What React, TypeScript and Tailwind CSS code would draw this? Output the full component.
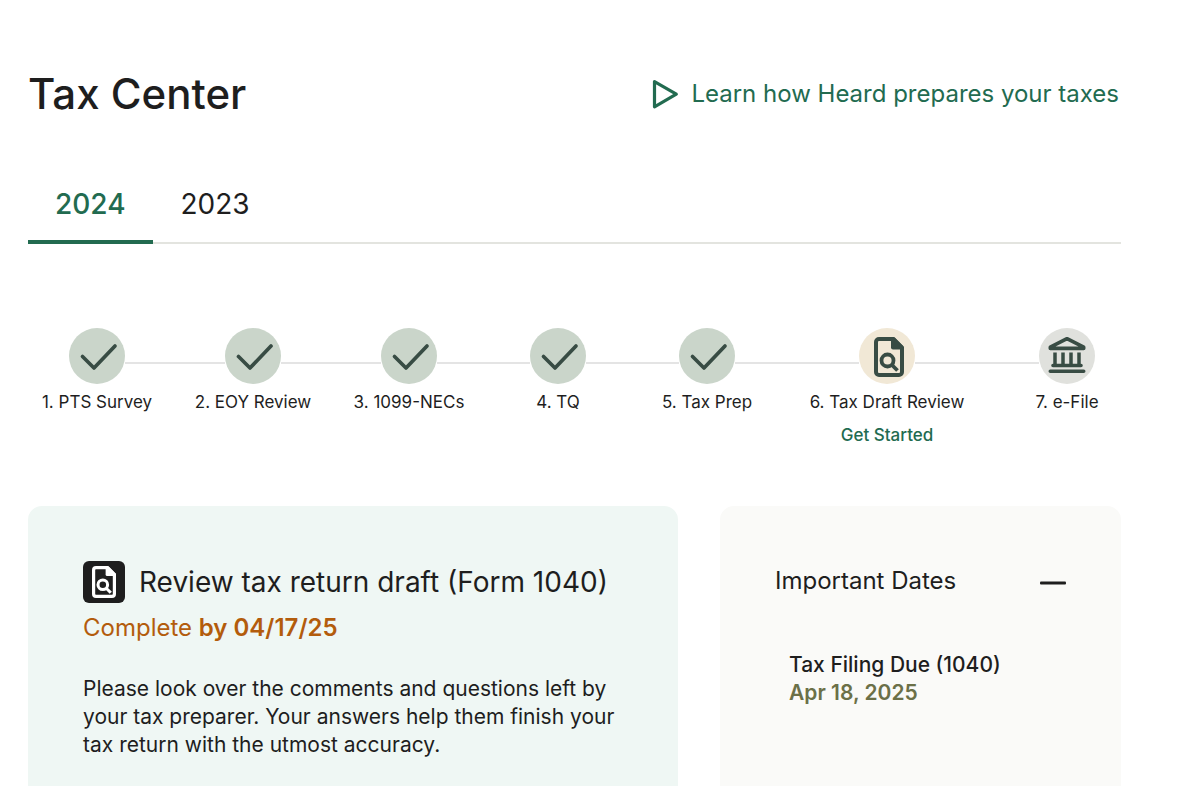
import type { ReactNode } from "react";

type Step = {
  label: string;
  status: "done" | "active" | "upcoming";
  action?: string;
};

const steps: Step[] = [
  { label: "1. PTS Survey", status: "done" },
  { label: "2. EOY Review", status: "done" },
  { label: "3. 1099-NECs", status: "done" },
  { label: "4. TQ", status: "done" },
  { label: "5. Tax Prep", status: "done" },
  { label: "6. Tax Draft Review", status: "active", action: "Get Started" },
  { label: "7. e-File", status: "upcoming" },
];

function PlayIcon() {
  return (
    <svg width="28" height="32" viewBox="0 0 28 32" fill="none">
      <path
        d="M3.5 3.6v25.200L25.300 16.200z"
        stroke="currentColor"
        strokeWidth="3.2"
        strokeLinejoin="round"
      />
    </svg>
  );
}

function CheckIcon() {
  return (
    <svg width="56" height="56" viewBox="0 0 56 56" fill="none">
      <path
        d="M13.5 28.500 25 40 46 18"
        stroke="currentColor"
        strokeWidth="3.7"
        strokeLinecap="round"
        strokeLinejoin="round"
      />
    </svg>
  );
}

function DraftIcon({ className }: { className: string }) {
  return (
    <svg className={className} viewBox="0 0 30 40" fill="none">
      <path
        d="M5 2h14.5L28 10.500V35a3 3 0 0 1-3 3H5a3 3 0 0 1-3-3V5a3 3 0 0 1 3-3z"
        stroke="currentColor"
        strokeWidth="4"
      />
      <path d="M17 1h4l8 8v3.500H19a2 2 0 0 1-2-2z" fill="currentColor" />
      <circle cx="13.500" cy="23.500" r="6" stroke="currentColor" strokeWidth="3.800" />
      <path d="m17.500 27.500 6 6" stroke="currentColor" strokeWidth="3.800" />
    </svg>
  );
}

function BankIcon() {
  return (
    <svg width="38" height="38" viewBox="0 0 38 38" fill="none" stroke="currentColor">
      <path
        d="M2.300 12.400v-1.200L19 2.700l16.700 8.500v1.200z"
        strokeWidth="3.600"
        strokeLinejoin="round"
      />
      <path d="M7 16.500v12.500M15 16.500v12.500M23 16.500v12.500M31 16.500v12.500" strokeWidth="3.500" />
      <path d="M5 29.500h28M2.300 35.200h33.400" strokeWidth="3.600" strokeLinecap="round" />
    </svg>
  );
}

function StepCircle({ status }: { status: Step["status"] }) {
  if (status === "done") {
    return (
      <div className="size-14 rounded-full bg-[#cad5ca]">
        <CheckIcon />
      </div>
    );
  }
  if (status === "active") {
    return (
      <div className="flex size-14 justify-center rounded-full bg-[#f1e8d6] pt-[9px] pl-1">
        <DraftIcon className="h-10 w-[30px]" />
      </div>
    );
  }
  return (
    <div className="flex size-14 justify-center rounded-full bg-[#e0e1dd] pt-2">
      <BankIcon />
    </div>
  );
}

function Card({ className, children }: { className: string; children: ReactNode }) {
  return <section className={`rounded-t-[14px] px-[55px] pt-[55px] ${className}`}>{children}</section>;
}

export default function App() {
  return (
    <main className="flex min-h-screen flex-col bg-white pr-[79px] pl-7 font-['Inter',sans-serif] text-[#1e1e1e]">
      <header className="mt-16 flex items-center justify-between">
        <h1 className="text-[42px] leading-[60px] font-medium">Tax Center</h1>
        <a href="#learn" className="flex items-center gap-3 pr-0.5 text-2xl text-[#226b50]">
          <PlayIcon />
          Learn how Heard prepares your taxes
        </a>
      </header>

      <nav className="mt-10 flex border-b-2 border-[#e3e4df] text-[28px] leading-10">
        <a
          href="#2024"
          className="-mb-0.5 border-b-4 border-[#226b50] px-[27px] pt-5 pb-4 font-medium text-[#226b50]"
        >
          2024
        </a>
        <a href="#2023" className="px-7 pt-5 pb-4">
          2023
        </a>
      </nav>

      <ol className="mt-[84px] -mr-[15px] grid grid-cols-[138fr_174fr_138fr_160fr_138fr_222fr_138fr] text-[17px] leading-7 whitespace-nowrap">
        {steps.map((step, i) => (
          <li key={step.label} className="flex flex-col items-center">
            <div className="flex w-full items-start text-[#384c44]">
              <div className={`mt-[34px] h-0.5 flex-1 ${i > 0 ? "bg-[#e4e4e4]" : ""}`} />
              <StepCircle status={step.status} />
              <div
                className={`mt-[34px] h-0.5 flex-1 ${i < steps.length - 1 ? "bg-[#e4e4e4]" : ""}`}
              />
            </div>
            <span className="mt-1">{step.label}</span>
            {step.action && (
              <a href="#review" className="mt-[5px] font-medium text-[#226b50]">
                {step.action}
              </a>
            )}
          </li>
        ))}
      </ol>

      <div className="mt-[57px] grid flex-1 grid-cols-[650fr_401fr] gap-[42px]">
        <Card className="bg-[#eff7f4]">
          <div className="flex items-center gap-3.5">
            <div className="flex size-[42px] items-center justify-center rounded-md bg-[#1e1e1e] text-white">
              <DraftIcon className="h-8 w-6" />
            </div>
            <h2 className="text-[28px] leading-10 whitespace-nowrap">
              Review tax return draft (Form 1040)
            </h2>
          </div>
          <p className="mt-[5px] text-2xl leading-10 text-[#b35c0c]">
            Complete <strong className="font-semibold">by 04/17/25</strong>
          </p>
          <p className="mt-[27px] text-[21px] leading-7">
            Please look over the comments and questions left by your tax preparer. Your answers
            help them finish your tax return with the utmost accuracy.
          </p>
        </Card>

        <Card className="bg-[#fafaf8]">
          <div className="flex items-center justify-between">
            <h2 className="text-2xl leading-9">Important Dates</h2>
            <button type="button" aria-label="Collapse" className="pt-5 pb-4">
              <svg width="26" height="4" viewBox="0 0 26 4">
                <rect width="26" height="3" y="0.500" rx="1" fill="currentColor" />
              </svg>
            </button>
          </div>
          <dl className="mt-[50px] ml-3.5 text-[21px] leading-7">
            <dt className="font-medium">Tax Filing Due (1040)</dt>
            <dd className="font-semibold text-[#6b7048]">Apr 18, 2025</dd>
          </dl>
        </Card>
      </div>
    </main>
  );
}
